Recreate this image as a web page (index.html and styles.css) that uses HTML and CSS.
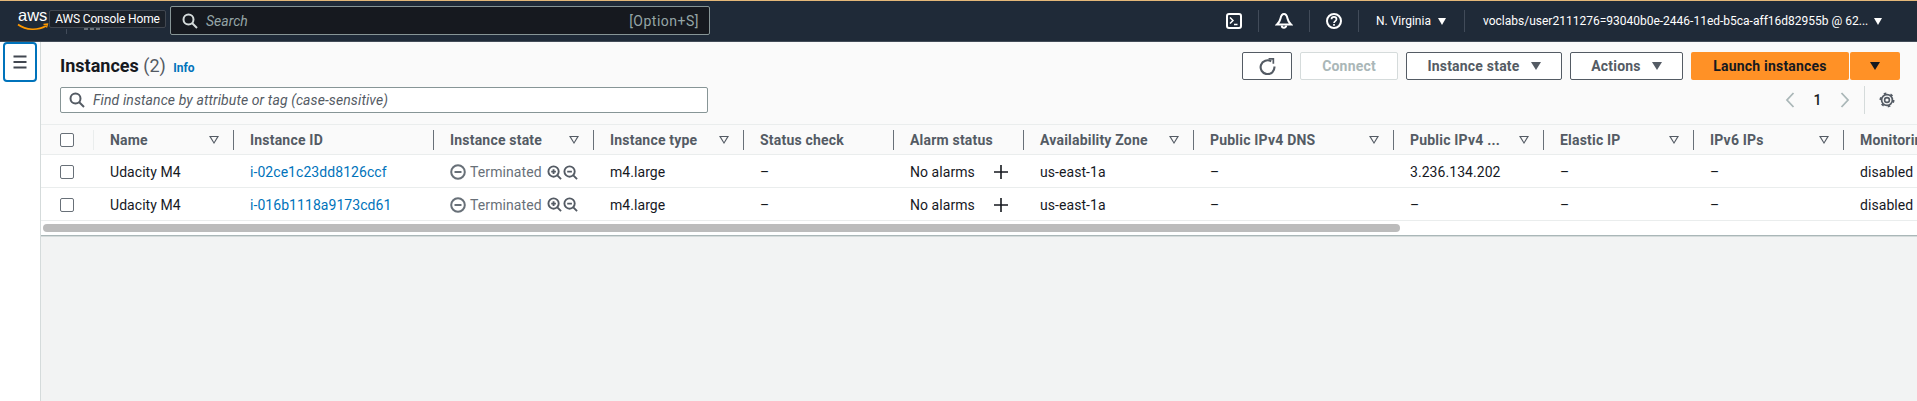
FILE: index.html
```html
<!DOCTYPE html>
<html lang="en">

<head>
    <meta charset="UTF-8">
    <title>Instances | EC2</title>
    <link rel="stylesheet" href="styles.css">
</head>

<body>

    <header class="topbar">
        <div class="brand">
            <svg class="aws-logo" viewBox="0 0 32 20" width="32" height="20">
                <text x="0" y="10" class="aws-word">aws</text>
                <path d="M0 13.5C8 19.5 20 19.500 28 15" fill="none" stroke="#ff9900" stroke-width="1.6"/>
                <path d="M25.5 13.500l4-.5-1 3.500" fill="none" stroke="#ff9900" stroke-width="1.3"/>
            </svg>
            <svg class="brand-rest" viewBox="0 0 36 6" width="36" height="6" fill="#687078">
                <rect x="0" y="1" width="1" height="5" fill="#414b59"/>
                <rect x="18" y="0" width="4" height="2"/>
                <rect x="24" y="0" width="4" height="2"/>
                <rect x="30" y="0" width="4" height="2"/>
            </svg>
            <span class="home-tip">AWS Console Home</span>
        </div>
        <div class="global-search">
            <svg class="ico" viewBox="0 0 16 16" width="16" height="16">
                <circle cx="6.5" cy="6.5" r="5" fill="none" stroke="#d5dbdb" stroke-width="2"/>
                <path d="M10 10l5 5" stroke="#d5dbdb" stroke-width="2"/>
            </svg>
            <span class="global-search-text">Search</span>
            <span class="shortcut">[Option+S]</span>
        </div>
        <nav class="top-tools">
            <span class="tool tool-term">
                <svg viewBox="0 0 18 18" width="18" height="18" fill="none" stroke="#fff" stroke-width="2">
                    <rect x="2" y="2" width="14" height="14" rx="2"/>
                    <path d="M5 5.5l3 3-3 3M9 12.500h3.500" stroke-width="1.5"/>
                </svg>
            </span>
            <span class="tool tool-bell">
                <svg viewBox="0 0 18 18" width="18" height="18" fill="none" stroke="#fff" stroke-width="2">
                    <path d="M9 2C6.500 2 6 4 5.500 6.500 5 9 4 10.500 2 12.500h14c-2-2-3-3.500-3.500-6C12 4 11.500 2 9 2z"/>
                    <path d="M6.800 13.500a2.200 2.200 0 0 0 4.400 0"/>
                </svg>
            </span>
            <span class="tool tool-help">
                <svg viewBox="0 0 18 18" width="18" height="18" fill="none" stroke="#fff" stroke-width="2">
                    <circle cx="9" cy="9" r="7"/>
                    <path d="M6.500 7.200c0-3.200 5-3.200 5 0 0 2-2.500 1.800-2.500 3.800" stroke-width="1.7"/>
                    <path d="M9 12v1.700" stroke-width="1.7"/>
                </svg>
            </span>
            <span class="tool tool-region">N. Virginia <i class="caret-w"></i></span>
            <span class="tool tool-user">voclabs/user2111276=93040b0e-2446-11ed-b5ca-aff16d82955b @ 62... <i class="caret-w"></i></span>
        </nav>
    </header>

    <div class="shell">
        <aside class="sidenav">
            <button class="menu-btn">
                <svg viewBox="0 0 16 16" width="16" height="16" fill="none" stroke="#414750" stroke-width="1.8">
                    <path d="M1.500 2.500h13M1.500 8h13M1.500 13.500h13"/>
                </svg>
            </button>
        </aside>

        <main class="content">
            <section class="panel-head">
                <div class="head-left">
                    <h1 class="title">Instances <span class="count">(2)</span> <a class="info">Info</a></h1>
                    <div class="filter-box">
                        <svg viewBox="0 0 16 16" width="16" height="16" fill="none" stroke="#545b64" stroke-width="2">
                            <circle cx="6.5" cy="6.5" r="5"/>
                            <path d="M10 10l5 5"/>
                        </svg>
                        <span>Find instance by attribute or tag (case-sensitive)</span>
                    </div>
                </div>
                <div class="head-right">
                    <div class="actions">
                        <button class="btn btn-refresh">
                            <svg viewBox="0 0 16 16" width="17" height="17" fill="none" stroke="#545b64" stroke-width="2">
                                <path d="M11.500 3.200A6.500 6.500 0 1 0 14.500 8"/>
                                <path d="M9 .8h4.500v4.500" stroke-width="1.6"/>
                            </svg>
                        </button>
                        <button class="btn btn-disabled">Connect</button>
                        <button class="btn btn-state">Instance state <i class="caret"></i></button>
                        <button class="btn btn-actions">Actions <i class="caret"></i></button>
                        <div class="launch">
                            <button class="btn-primary btn-launch">Launch instances</button>
                            <button class="btn-primary btn-launch-caret"><i class="caret caret-dark"></i></button>
                        </div>
                    </div>
                    <div class="pager">
                        <svg viewBox="0 0 12 18" width="12" height="18" fill="none" stroke="#aab7b8" stroke-width="1.8"><path d="M9.500 2L3 9l6.500 7"/></svg>
                        <span class="page-num">1</span>
                        <svg viewBox="0 0 12 18" width="12" height="18" fill="none" stroke="#aab7b8" stroke-width="1.8"><path d="M2.500 2L9 9l-6.500 7"/></svg>
                        <span class="pager-sep"></span>
                        <svg class="gear" viewBox="0 0 16 16" width="16" height="16" fill="none" stroke="#545b64">
                            <circle cx="8" cy="8" r="2.4" stroke-width="1.6"/>
                            <circle cx="8" cy="8" r="5.4" stroke-width="1.7"/>
                            <circle cx="8" cy="8" r="6.6" stroke-width="1.8" stroke-dasharray="2.6 4.3"/>
                        </svg>
                    </div>
                </div>
            </section>

            <div class="table-wrap">
                <table class="instances">
                    <thead>
                        <tr>
                            <th class="c-check"><span class="box"></span></th>
                            <th class="c-name">Name<i class="sort"></i></th>
                            <th class="c-id">Instance ID</th>
                            <th class="c-state">Instance state<i class="sort"></i></th>
                            <th class="c-type">Instance type<i class="sort"></i></th>
                            <th class="c-status">Status check</th>
                            <th class="c-alarm">Alarm status</th>
                            <th class="c-az">Availability Zone<i class="sort"></i></th>
                            <th class="c-dns">Public IPv4 DNS<i class="sort"></i></th>
                            <th class="c-ip">Public IPv4 ...<i class="sort"></i></th>
                            <th class="c-eip">Elastic IP<i class="sort"></i></th>
                            <th class="c-v6">IPv6 IPs<i class="sort"></i></th>
                            <th class="c-mon">Monitoring</th>
                        </tr>
                    </thead>
                    <tbody>
                        <tr>
                            <td><span class="box"></span></td>
                            <td>Udacity M4</td>
                            <td><a class="link">i-02ce1c23dd8126ccf</a></td>
                            <td>
                                <span class="state">
                                    <svg viewBox="0 0 16 16" width="16" height="16" fill="none" stroke="#687078" stroke-width="2"><circle cx="8" cy="8" r="6.8"/><path d="M4.500 8h7"/></svg>
                                    Terminated
                                    <svg class="zoom-in" viewBox="0 0 16 16" width="15" height="15" fill="none" stroke="#545b64" stroke-width="2"><circle cx="7" cy="7" r="5.5"/><path d="M11 11l4 4M4.500 7h5M7 4.500v5" /></svg>
                                    <svg class="zoom-out" viewBox="0 0 16 16" width="15" height="15" fill="none" stroke="#545b64" stroke-width="2"><circle cx="7" cy="7" r="5.5"/><path d="M11 11l4 4M4.500 7h5"/></svg>
                                </span>
                            </td>
                            <td>m4.large</td>
                            <td>–</td>
                            <td><span class="alarm">No alarms <svg viewBox="0 0 16 16" width="16" height="16" stroke="#16191f" stroke-width="1.6"><path d="M8 1v14M1 8h14"/></svg></span></td>
                            <td>us-east-1a</td>
                            <td>–</td>
                            <td>3.236.134.202</td>
                            <td>–</td>
                            <td>–</td>
                            <td>disabled</td>
                        </tr>
                        <tr>
                            <td><span class="box"></span></td>
                            <td>Udacity M4</td>
                            <td><a class="link">i-016b1118a9173cd61</a></td>
                            <td>
                                <span class="state">
                                    <svg viewBox="0 0 16 16" width="16" height="16" fill="none" stroke="#687078" stroke-width="2"><circle cx="8" cy="8" r="6.8"/><path d="M4.500 8h7"/></svg>
                                    Terminated
                                    <svg class="zoom-in" viewBox="0 0 16 16" width="15" height="15" fill="none" stroke="#545b64" stroke-width="2"><circle cx="7" cy="7" r="5.5"/><path d="M11 11l4 4M4.500 7h5M7 4.500v5"/></svg>
                                    <svg class="zoom-out" viewBox="0 0 16 16" width="15" height="15" fill="none" stroke="#545b64" stroke-width="2"><circle cx="7" cy="7" r="5.5"/><path d="M11 11l4 4M4.500 7h5"/></svg>
                                </span>
                            </td>
                            <td>m4.large</td>
                            <td>–</td>
                            <td><span class="alarm">No alarms <svg viewBox="0 0 16 16" width="16" height="16" stroke="#16191f" stroke-width="1.6"><path d="M8 1v14M1 8h14"/></svg></span></td>
                            <td>us-east-1a</td>
                            <td>–</td>
                            <td>–</td>
                            <td>–</td>
                            <td>–</td>
                            <td>disabled</td>
                        </tr>
                    </tbody>
                </table>
                <div class="scroll-track"><div class="scroll-thumb"></div></div>
            </div>
            <div class="empty"></div>
        </main>
    </div>

</body>

</html>
```

FILE: styles.css
```css
* {
    padding: 0;
    margin: 0;
    box-sizing: border-box;
}

html, body {
    height: 100%;
    overflow: hidden;
}

body {
    font-family: Roboto, "Liberation Sans", sans-serif;
    font-size: 14px;
    color: #16191f;
    background-color: #fff;
    display: flex;
    flex-direction: column;
}

button {
    font-family: inherit;
}

/* top bar */
.topbar {
    height: 42px;
    flex: none;
    background-color: #1f2a38;
    border-top: 1px solid #e3b778;
    border-bottom: 1px solid #424c58;
    display: flex;
    align-items: center;
    color: #fff;
}

.brand {
    width: 170px;
    height: 100%;
    flex: none;
    display: flex;
    align-items: center;
    padding-left: 18px;
    position: relative;
}

.aws-logo {
    overflow: visible;
}

.aws-word {
    font-family: "Liberation Sans", sans-serif;
    font-size: 16.5px;
    fill: #fff;
}

.brand-rest {
    position: absolute;
    left: 66px;
    top: 27px;
}

.home-tip {
    position: absolute;
    left: 49px;
    top: 9px;
    height: 18px;
    width: 117px;
    background-color: #1b2129;
    border: 1px solid #414750;
    border-radius: 2px;
    font-size: 12px;
    line-height: 16px;
    letter-spacing: -.15px;
    text-align: center;
    white-space: nowrap;
}

.global-search {
    width: 540px;
    height: 29px;
    flex: none;
    margin-top: -1px;
    background-color: #16191f;
    border: 1px solid #879596;
    border-radius: 2px;
    display: flex;
    align-items: center;
    padding: 0 10px 0 11px;
    gap: 8px;
    font-size: 14px;
    color: #95a5a6;
}

.global-search-text {
    font-style: italic;
    flex: 1;
}

.shortcut {
    letter-spacing: .5px;
}

.top-tools {
    margin-left: auto;
    display: flex;
    align-items: center;
    height: 100%;
}

.tool {
    height: 22px;
    display: flex;
    align-items: center;
    justify-content: center;
    border-right: 1px solid #414b59;
}

.tool-term { width: 50px; }
.tool-bell { width: 51px; }
.tool-help { width: 49px; }

.tool-region {
    width: 106px;
    justify-content: flex-start;
    gap: 7px;
    font-size: 12px;
    padding-left: 17px;
}

.tool-user {
    width: 452px;
    justify-content: flex-start;
    border-right: none;
    font-size: 12px;
    gap: 3px;
    padding-left: 18px;
    white-space: pre;
}

.caret-w {
    width: 0;
    height: 0;
    border-left: 4px solid transparent;
    border-right: 4px solid transparent;
    border-top: 7px solid #fff;
}

/* main area */
.shell {
    flex: 1;
    display: flex;
    min-height: 0;
}

.sidenav {
    width: 41px;
    flex: none;
    background-color: #fff;
    border-right: 1px solid #d5dbdb;
}

.menu-btn {
    display: flex;
    align-items: center;
    justify-content: center;
    width: 34px;
    height: 40px;
    margin-left: 3px;
    background-color: #fff;
    border: 2px solid #0073bb;
    border-radius: 4px;
}

.content {
    flex: 1;
    min-width: 0;
    display: flex;
    flex-direction: column;
    background-color: #f2f3f3;
}

/* header above the table */
.panel-head {
    height: 82px;
    flex: none;
    background-color: #fafafa;
    display: flex;
    justify-content: space-between;
    padding: 0 17px 0 19px;
}

.title {
    font-size: 18px;
    font-weight: 700;
    line-height: 24px;
    height: 24px;
    margin-top: 12px;
}

.count {
    font-weight: 400;
    color: #545b64;
}

.info {
    font-size: 12px;
    font-weight: 700;
    color: #0073bb;
    margin-left: 3px;
}

.filter-box {
    width: 648px;
    height: 26px;
    margin-top: 9px;
    background-color: #fff;
    border: 1px solid #879596;
    border-radius: 2px;
    display: flex;
    align-items: center;
    padding-left: 8px;
    gap: 8px;
    font-style: italic;
    letter-spacing: .1px;
    color: #545b64;
}

.head-right {
    display: flex;
    flex-direction: column;
    align-items: flex-end;
}

.actions {
    display: flex;
    gap: 8px;
    margin-top: 10px;
}

.btn {
    height: 28px;
    background-color: #fff;
    border: 1px solid #545b64;
    border-radius: 2px;
    font-size: 14px;
    font-weight: 700;
    letter-spacing: .2px;
    color: #545b64;
    display: flex;
    align-items: center;
    justify-content: center;
    gap: 11px;
}

.btn-refresh { width: 50px; }
.btn-disabled { width: 98px; border-color: #d5dbdb; color: #aab7b8; }
.btn-state { width: 156px; }
.btn-actions { width: 113px; }

.caret {
    width: 0;
    height: 0;
    border-left: 5.5px solid transparent;
    border-right: 5.5px solid transparent;
    border-top: 8px solid #545b64;
}

.caret-dark {
    border-top-color: #16191f;
}

.launch {
    display: flex;
    gap: 1px;
}

.btn-primary {
    height: 28px;
    background-color: #ff9126;
    border: none;
    border-radius: 2px;
    font-size: 14px;
    font-weight: 700;
    letter-spacing: .2px;
    color: #16191f;
    display: flex;
    align-items: center;
    justify-content: center;
}

.btn-launch { width: 158px; }
.btn-launch-caret { width: 50px; }

.pager {
    display: flex;
    align-items: center;
    height: 28px;
    margin-top: 6px;
}

.page-num {
    width: 43px;
    text-align: center;
    font-weight: 500;
}

.pager-sep {
    width: 1px;
    height: 28px;
    background-color: #d5dbdb;
    margin: 0 14px 0 13px;
}

.gear {
    margin-right: 5px;
}

/* table */
.table-wrap {
    flex: none;
    background-color: #fff;
    overflow: hidden;
    border-bottom: 1px solid #aab7b8;
    height: 112px;
}

.instances {
    width: 1900px;
    table-layout: fixed;
    border-collapse: separate;
    border-spacing: 0;
}

.c-check { width: 53px; }
.c-name { width: 140px; }
.c-id { width: 200px; }
.c-state { width: 160px; }
.c-type { width: 150px; }
.c-status { width: 150px; }
.c-alarm { width: 130px; }
.c-az { width: 170px; }
.c-dns { width: 200px; }
.c-ip { width: 150px; }
.c-eip { width: 150px; }
.c-v6 { width: 150px; }
.c-mon { width: 150px; }

th {
    height: 31px;
    background-color: #fafafa;
    border-top: 1px solid #eaeded;
    border-bottom: 1px solid #eaeded;
    text-align: left;
    font-size: 14px;
    font-weight: 700;
    letter-spacing: .2px;
    color: #545b64;
    padding-left: 16px;
    position: relative;
    white-space: nowrap;
}

th::after {
    content: "";
    position: absolute;
    right: 0;
    top: 5px;
    height: 20px;
    width: 1px;
    background-color: #687078;
}

th.c-check::after {
    background-color: #eaeded;
}

th.c-mon::after {
    display: none;
}

th:first-child, td:first-child {
    padding-left: 19px;
}

.sort {
    position: absolute;
    right: 15px;
    top: 11px;
    width: 10px;
    height: 8px;
    border-left: 5px solid transparent;
    border-right: 5px solid transparent;
    border-top: 8px solid #545b64;
}

.sort::after {
    content: "";
    position: absolute;
    left: -3px;
    top: -7px;
    border-left: 3px solid transparent;
    border-right: 3px solid transparent;
    border-top: 5px solid #fafafa;
}

td {
    height: 33px;
    border-bottom: 1px solid #eaeded;
    padding-left: 16px;
    padding-top: 2px;
    letter-spacing: .06px;
    white-space: nowrap;
    overflow: visible;
}

tbody tr:last-child td {
    padding-top: 1px;
}

.box {
    display: block;
    width: 14px;
    height: 14px;
    background-color: #fff;
    border: 1px solid #687078;
    border-radius: 2px;
}

.link {
    color: #0073bb;
}

.state {
    display: flex;
    align-items: center;
    gap: 4px;
    letter-spacing: .1px;
    color: #687078;
}

.zoom-in {
    margin-left: 1px;
}

.zoom-out {
    margin-left: -3px;
}

.alarm {
    display: flex;
    align-items: center;
    gap: 18px;
}

.scroll-track {
    height: 14px;
    padding: 3px 0 0 2px;
}

.scroll-thumb {
    width: 1357px;
    height: 8px;
    background-color: #bcbcbc;
    border-radius: 4px;
}

.empty {
    flex: 1;
    background-color: #f2f3f3;
    border-top: 1px solid #d5dbdb;
}
```
